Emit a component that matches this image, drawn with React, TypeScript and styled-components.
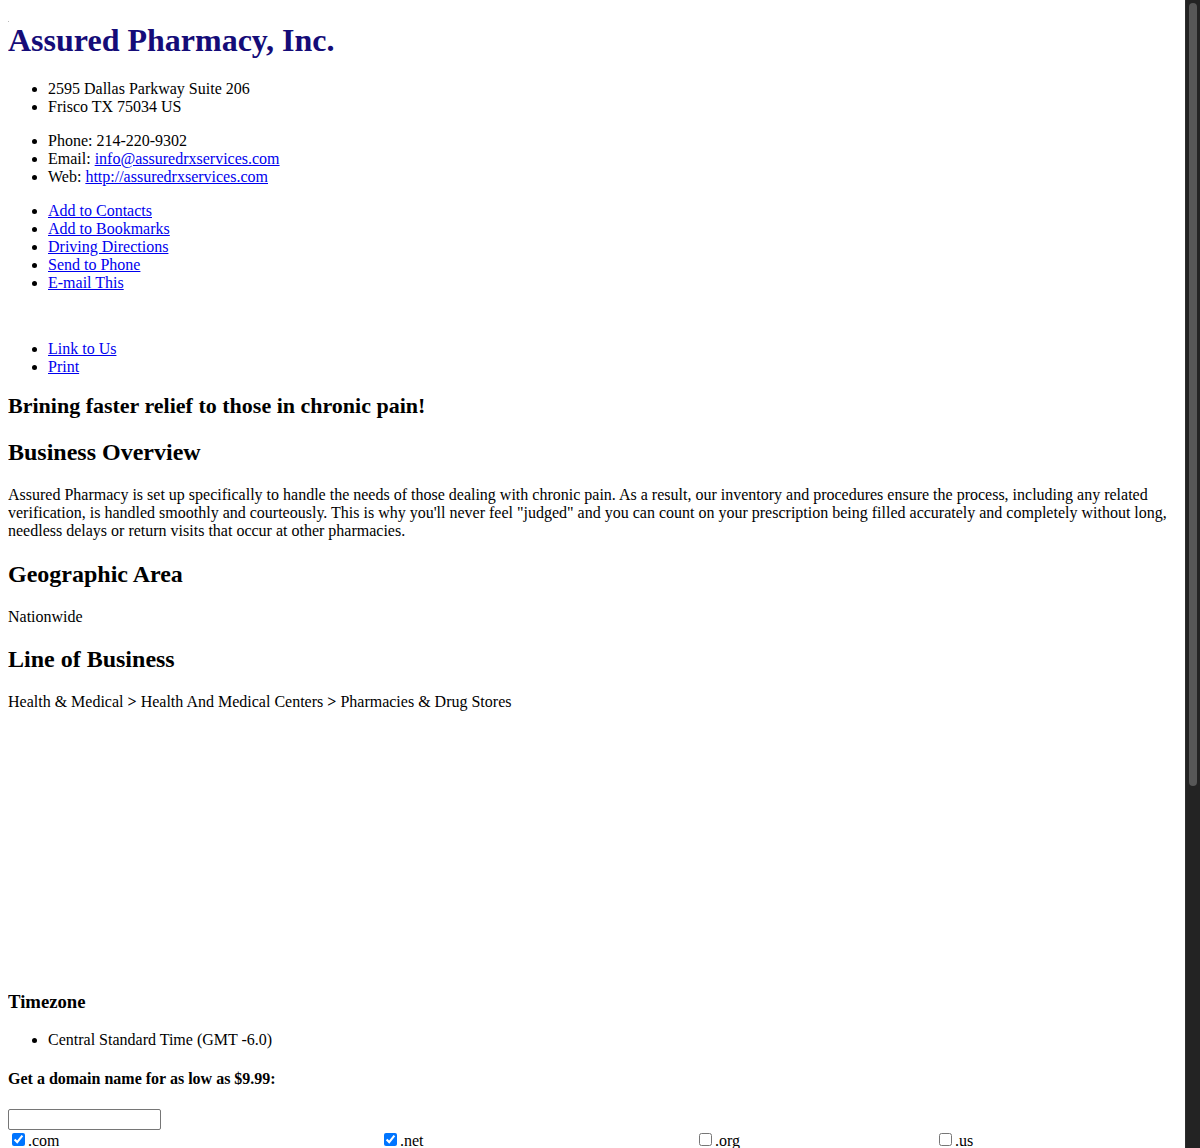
import React, { useState } from "react";
import styled, { createGlobalStyle } from "styled-components";

const GlobalStyle = createGlobalStyle`
    body {
        margin: 8px 23px 8px 8px;
        font-family: "Liberation Serif", "Times New Roman", serif;
        font-size: 16px;
        color: #000;
        background: #fff;
    }
    a {
        color: #0000ee;
    }
`;

const tlds = [
    { name: ".com", checked: true },
    { name: ".net", checked: true },
    { name: ".org", checked: false },
    { name: ".us", checked: false },
];

const App: React.FC = () => {
    const [domain, setDomain] = useState("");
    const [selected, setSelected] = useState(tlds.map((t) => t.checked));

    const toggle = (i: number) => {
        setSelected(selected.map((v, j) => (j === i ? !v : v)));
    };

    return (
        <>
            <GlobalStyle />
            <ScrollTrack>
                <ScrollThumb />
            </ScrollTrack>

            <TopBar>
                <Pixel />
            </TopBar>
            <Title>Assured Pharmacy, Inc.</Title>

            <List>
                <li>2595 Dallas Parkway Suite 206</li>
                <li>Frisco TX 75034 US</li>
            </List>

            <List>
                <li>Phone: 214-220-9302</li>
                <li>
                    Email: <a href="#">info@assuredrxservices.com</a>
                </li>
                <li>
                    Web: <a href="#">http://assuredrxservices.com</a>
                </li>
            </List>

            <List>
                <li><a href="#">Add to Contacts</a></li>
                <li><a href="#">Add to Bookmarks</a></li>
                <li><a href="#">Driving Directions</a></li>
                <li><a href="#">Send to Phone</a></li>
                <li><a href="#">E-mail This</a></li>
            </List>

            <Spacer size={16} />

            <List>
                <li><a href="#">Link to Us</a></li>
                <li><a href="#">Print</a></li>
            </List>

            <Tagline>Brining faster relief to those in chronic pain!</Tagline>

            <Section>Business Overview</Section>
            <Text gap={21}>
                Assured Pharmacy is set up specifically to handle the needs of those
                dealing with chronic pain. As a result, our inventory and procedures
                ensure the process, including any related verification, is handled
                smoothly and courteously. This is why you'll never feel "judged" and
                you can count on your prescription being filled accurately and
                completely without long, needless delays or return visits that occur
                at other pharmacies.
            </Text>

            <Section>Geographic Area</Section>
            <Text>Nationwide</Text>

            <Section>Line of Business</Section>
            <Text>
                Health &amp; Medical <Arrow>&gt;</Arrow> Health And Medical Centers{" "}
                <Arrow>&gt;</Arrow> Pharmacies &amp; Drug Stores
            </Text>

            <Spacer size={246} />

            <SmallHeading>Timezone</SmallHeading>
            <List>
                <li>Central Standard Time (GMT -6.0)</li>
            </List>

            <DomainTitle>Get a domain name for as low as $9.99:</DomainTitle>
            <DomainForm onSubmit={(e) => e.preventDefault()}>
                <DomainInput
                    type="text"
                    value={domain}
                    onChange={(e) => setDomain(e.target.value)}
                />
                <TldGrid>
                    {tlds.map((t, i) => (
                        <TldLabel key={t.name}>
                            <input
                                type="checkbox"
                                checked={selected[i]}
                                onChange={() => toggle(i)}
                            />
                            {t.name}
                        </TldLabel>
                    ))}
                </TldGrid>
                <SearchButton type="submit">Search</SearchButton>
            </DomainForm>

            <Spacer size={420} />
        </>
    );
};

export default App;

// the browser's own dark scrollbar, drawn over the right edge
const ScrollTrack = styled.div`
    position: fixed;
    top: 0;
    right: 0;
    bottom: 0;
    width: 15px;
    background: #232323;
    border-left: 1px solid #2e2e2e;
    box-sizing: border-box;
    padding: 3px 3px 0 3px;
`;

const ScrollThumb = styled.div`
    height: 783px;
    background: #575757;
    border-radius: 5px;
`;

const TopBar = styled.div`
    display: flex;
    align-items: flex-end;
    height: 14px;
`;

const Pixel = styled.span`
    width: 1px;
    height: 1px;
    background: #bbb;
`;

const Title = styled.h1`
    color: #150c78;
    font-size: 32px;
    font-weight: bold;
    margin: 0 0 21px;
`;

const List = styled.ul`
    margin: 16px 0;
    padding-left: 40px;
`;

const Spacer = styled.div<{ size: number }>`
    height: ${({ size }) => size}px;
`;

const Tagline = styled.h2`
    font-size: 22px;
    margin: 17px 0;
`;

const SmallHeading = styled.h3`
    font-size: 1.17em;
    margin: 18.72px 0 17.7px;
`;

const Section = styled.h2`
    font-size: 1.5em;
    margin: 0.83em 0;
`;

const Text = styled.p<{ gap?: number }>`
    margin: 16px 0 ${({ gap }) => gap ?? 16}px;
`;

const Arrow = styled.b`
    font-weight: bold;
`;

const DomainTitle = styled.h4`
    margin: 1.33em 0 20.3px;
`;

const DomainForm = styled.form`
    margin: 0;
`;

const DomainInput = styled.input`
    display: block;
    box-sizing: border-box;
    width: 153px;
    height: 21px;
    padding: 1px 2px;
    border: 1px solid #767676;
    border-radius: 2px;
    font-size: 13.33px;
`;

const TldGrid = styled.div`
    display: grid;
    grid-template-columns: 372px 315px 240px 1fr;
`;

const TldLabel = styled.label`
    display: flex;
    align-items: baseline;
    height: 18px;

    input {
        margin: 3px 3px 3px 4px;
    }
`;

const SearchButton = styled.button`
    margin-top: 8px;
`;
